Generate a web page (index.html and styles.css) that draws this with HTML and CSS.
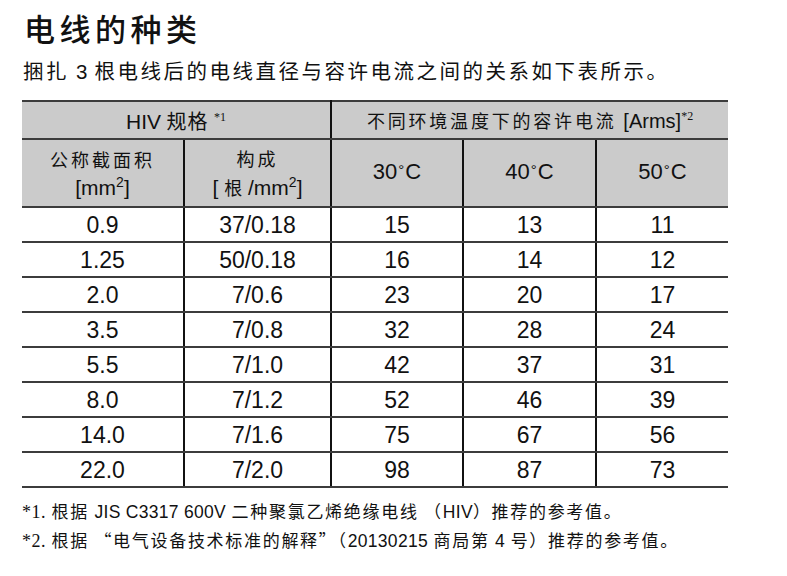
FILE: index.html
```html
<!DOCTYPE html>
<html lang="zh-CN">
<head>
<meta charset="utf-8">
<title>电线的种类</title>
<link rel="stylesheet" href="styles.css">
</head>
<body>
<div class="page">
  <h1 class="title">电线的种类</h1>
  <p class="lead">捆扎 <span class="lat">3</span> 根电线后的电线直径与容许电流之间的关系如下表所示。</p>
  <table class="wires">
    <colgroup>
      <col class="c1"><col class="c2"><col class="c3"><col class="c4"><col class="c5">
    </colgroup>
    <thead>
      <tr class="h1">
        <th colspan="2"><span class="lat">HIV</span> 规格 <sup class="note">*1</sup></th>
        <th colspan="3" class="amb">不同环境温度下的容许电流 <span class="lat">[Arms]</span><sup class="note">*2</sup></th>
      </tr>
      <tr class="h2">
        <th><span class="cj">公称截面积</span><br><span class="lat">[mm<sup>2</sup>]</span></th>
        <th><span class="cj">构成</span><br><span class="lat">[ </span><span class="cjs">根</span><span class="lat"> /mm<sup>2</sup>]</span></th>
        <th class="temp">30<span class="deg">°</span>C</th>
        <th class="temp">40<span class="deg">°</span>C</th>
        <th class="temp">50<span class="deg">°</span>C</th>
      </tr>
    </thead>
    <tbody>
      <tr><td>0.9</td><td>37/0.18</td><td>15</td><td>13</td><td>11</td></tr>
      <tr><td>1.25</td><td>50/0.18</td><td>16</td><td>14</td><td>12</td></tr>
      <tr><td>2.0</td><td>7/0.6</td><td>23</td><td>20</td><td>17</td></tr>
      <tr><td>3.5</td><td>7/0.8</td><td>32</td><td>28</td><td>24</td></tr>
      <tr><td>5.5</td><td>7/1.0</td><td>42</td><td>37</td><td>31</td></tr>
      <tr><td>8.0</td><td>7/1.2</td><td>52</td><td>46</td><td>39</td></tr>
      <tr><td>14.0</td><td>7/1.6</td><td>75</td><td>67</td><td>56</td></tr>
      <tr><td>22.0</td><td>7/2.0</td><td>98</td><td>87</td><td>73</td></tr>
    </tbody>
  </table>
  <div class="notes">
    <p><span class="mark">*1.</span> 根据 <span class="lat">JIS C3317 600V</span> 二种聚氯乙烯绝缘电线 （<span class="lat">HIV</span>）推荐的参考值。</p>
    <p><span class="mark">*2.</span> 根据 “电气设备技术标准的解释”（<span class="lat">20130215</span> 商局第 <span class="lat">4</span> 号）推荐的参考值。</p>
  </div>
</div>
</body>
</html>
```

FILE: styles.css
```css
html, body {
  margin: 0;
  padding: 0;
  background: #ffffff;
}

body {
  color: #111111;
  font-family: "Liberation Sans", "Noto Sans CJK SC", sans-serif;
}

.page {
  padding: 0 0 0 22px;
  width: 706px;
}

.title {
  margin: 10px 0 0 2px;
  font-family: "Noto Sans CJK SC", sans-serif;
  font-size: 31px;
  font-weight: 500;
  line-height: 36px;
  letter-spacing: 4.5px;
}

.lead {
  margin: 10px 0 0 1px;
  font-family: "Noto Sans CJK SC", sans-serif;
  font-size: 20.5px;
  font-weight: 400;
  line-height: 28px;
  letter-spacing: 2.5px;
}

.lat {
  font-family: "Liberation Sans", sans-serif;
  letter-spacing: 0;
}

.wires {
  margin-top: 14px;
  border-collapse: collapse;
  table-layout: fixed;
  width: 706px;
}

.c1 { width: 162px; }
.c2 { width: 147px; }
.c3 { width: 132px; }
.c4 { width: 133px; }
.c5 { width: 132px; }

.wires th,
.wires td {
  padding: 0;
  text-align: center;
  border-top: 2px solid #3c3c3c;
  border-bottom: 2px solid #3c3c3c;
  border-left: 2px solid #111111;
  border-right: 2px solid #111111;
}

.wires tr > :first-child { border-left: none; }
.wires tr > :last-child { border-right: none; }

.wires th {
  background: #cbcbcb;
  font-weight: 400;
}

.h1 th {
  height: 36px;
  font-family: "Noto Sans CJK SC", sans-serif;
  font-size: 20px;
  letter-spacing: 1px;
}

.h1 th .lat { font-size: 21px; }

.h1 th.amb {
  font-size: 18px;
  letter-spacing: 2.8px;
}

.h1 th.amb .lat { font-size: 20px; }

.note {
  font-family: "Liberation Serif", serif;
  font-size: 12px;
  letter-spacing: 0;
  vertical-align: 8px;
  line-height: 0;
}

.h2 th {
  height: 62px;
  font-size: 21px;
  line-height: 28px;
}

.h2 .cj {
  font-family: "Noto Sans CJK SC", sans-serif;
  font-size: 18px;
  letter-spacing: 3px;
}

.h2 .cjs {
  font-family: "Noto Sans CJK SC", sans-serif;
  font-size: 18px;
}

.h2 sup {
  font-size: 14px;
  vertical-align: 8px;
  line-height: 0;
}

.h2 th.temp {
  font-size: 22px;
  padding-bottom: 4px;
}

.deg {
  font-size: 15px;
  vertical-align: 4px;
  padding: 0 1px;
}

.wires td {
  height: 33px;
  font-size: 23px;
  line-height: 28px;
}

.notes {
  margin-top: 9px;
  font-family: "Noto Sans CJK SC", sans-serif;
  font-size: 17px;
  letter-spacing: 1.7px;
}

.notes p {
  margin: 0;
  line-height: 28px;
}

.notes .lat { font-size: 17.5px; letter-spacing: 0.3px; }

.mark {
  font-family: "Liberation Serif", serif;
  font-size: 18px;
  letter-spacing: 0.5px;
}
```
